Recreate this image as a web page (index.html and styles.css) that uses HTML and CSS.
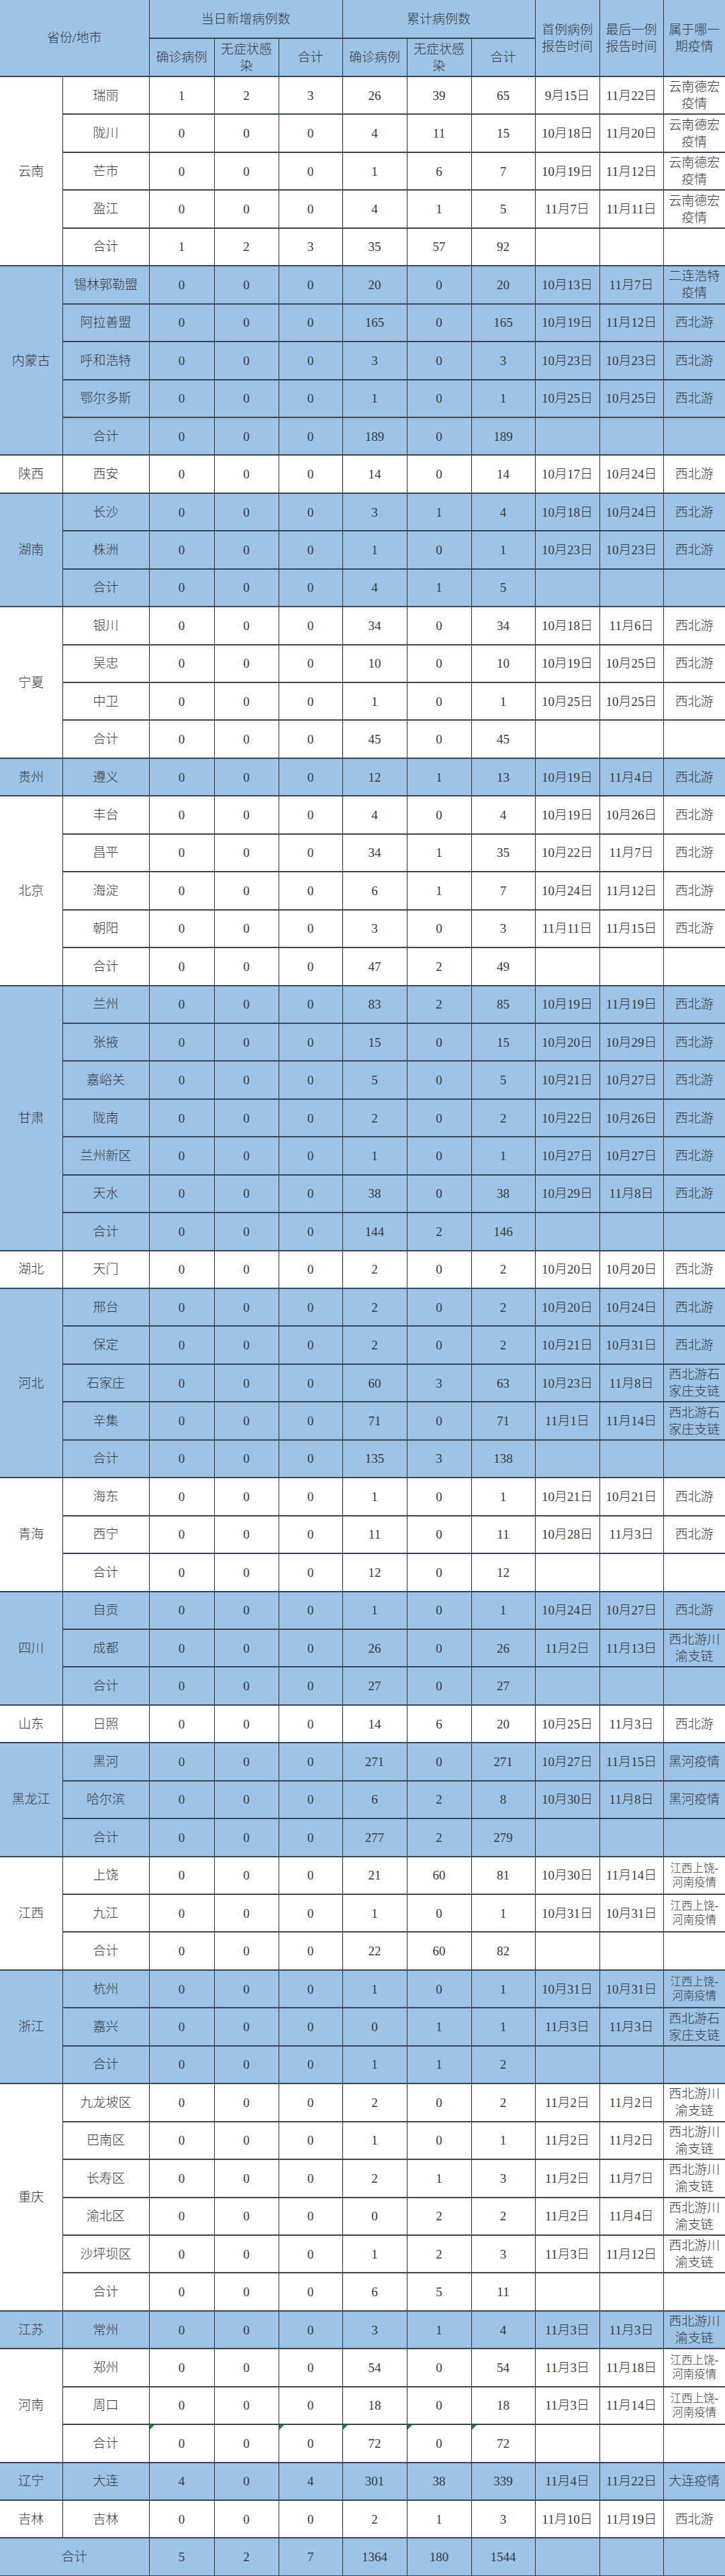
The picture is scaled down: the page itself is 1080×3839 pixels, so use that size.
FILE: index.html
```html
<!DOCTYPE html>
<html lang="zh-CN">
<head>
<meta charset="utf-8">
<title>疫情统计表</title>
<link rel="stylesheet" href="styles.css">
</head>
<body>
<table class="tbl">
<colgroup>
<col class="w-prov"><col class="w-city"><col class="w-n1"><col class="w-n2"><col class="w-n3"><col class="w-n4"><col class="w-n5"><col class="w-n6"><col class="w-d1"><col class="w-d2"><col class="w-tag">
</colgroup>
<thead>
<tr class="hr">
<th colspan="2" rowspan="2" class="p">省份/地市</th>
<th colspan="3">当日新增病例数</th>
<th colspan="3">累计病例数</th>
<th rowspan="2">首例病例报告时间</th>
<th rowspan="2">最后一例报告时间</th>
<th rowspan="2" class="last">属于哪一期疫情</th>
</tr>
<tr class="hr">
<th>确诊病例</th><th>无症状感染</th><th>合计</th><th>确诊病例</th><th>无症状感染</th><th>合计</th>
</tr>
</thead>
<tbody>
<tr class="w"><td class="p" rowspan="5">云南</td><td>瑞丽</td><td>1</td><td>2</td><td>3</td><td>26</td><td>39</td><td>65</td><td>9月15日</td><td>11月22日</td><td class="last">云南德宏疫情</td></tr>
<tr class="w"><td>陇川</td><td>0</td><td>0</td><td>0</td><td>4</td><td>11</td><td>15</td><td>10月18日</td><td>11月20日</td><td class="last">云南德宏疫情</td></tr>
<tr class="w"><td>芒市</td><td>0</td><td>0</td><td>0</td><td>1</td><td>6</td><td>7</td><td>10月19日</td><td>11月12日</td><td class="last">云南德宏疫情</td></tr>
<tr class="w"><td>盈江</td><td>0</td><td>0</td><td>0</td><td>4</td><td>1</td><td>5</td><td>11月7日</td><td>11月11日</td><td class="last">云南德宏疫情</td></tr>
<tr class="w"><td>合计</td><td>1</td><td>2</td><td>3</td><td>35</td><td>57</td><td>92</td><td></td><td></td><td class="last"></td></tr>

<tr class="b"><td class="p" rowspan="5">内蒙古</td><td>锡林郭勒盟</td><td>0</td><td>0</td><td>0</td><td>20</td><td>0</td><td>20</td><td>10月13日</td><td>11月7日</td><td class="last">二连浩特疫情</td></tr>
<tr class="b"><td>阿拉善盟</td><td>0</td><td>0</td><td>0</td><td>165</td><td>0</td><td>165</td><td>10月19日</td><td>11月12日</td><td class="last">西北游</td></tr>
<tr class="b"><td>呼和浩特</td><td>0</td><td>0</td><td>0</td><td>3</td><td>0</td><td>3</td><td>10月23日</td><td>10月23日</td><td class="last">西北游</td></tr>
<tr class="b"><td>鄂尔多斯</td><td>0</td><td>0</td><td>0</td><td>1</td><td>0</td><td>1</td><td>10月25日</td><td>10月25日</td><td class="last">西北游</td></tr>
<tr class="b"><td>合计</td><td>0</td><td>0</td><td>0</td><td>189</td><td>0</td><td>189</td><td></td><td></td><td class="last"></td></tr>

<tr class="w"><td class="p">陕西</td><td>西安</td><td>0</td><td>0</td><td>0</td><td>14</td><td>0</td><td>14</td><td>10月17日</td><td>10月24日</td><td class="last">西北游</td></tr>

<tr class="b"><td class="p" rowspan="3">湖南</td><td>长沙</td><td>0</td><td>0</td><td>0</td><td>3</td><td>1</td><td>4</td><td>10月18日</td><td>10月24日</td><td class="last">西北游</td></tr>
<tr class="b"><td>株洲</td><td>0</td><td>0</td><td>0</td><td>1</td><td>0</td><td>1</td><td>10月23日</td><td>10月23日</td><td class="last">西北游</td></tr>
<tr class="b"><td>合计</td><td>0</td><td>0</td><td>0</td><td>4</td><td>1</td><td>5</td><td></td><td></td><td class="last"></td></tr>

<tr class="w"><td class="p" rowspan="4">宁夏</td><td>银川</td><td>0</td><td>0</td><td>0</td><td>34</td><td>0</td><td>34</td><td>10月18日</td><td>11月6日</td><td class="last">西北游</td></tr>
<tr class="w"><td>吴忠</td><td>0</td><td>0</td><td>0</td><td>10</td><td>0</td><td>10</td><td>10月19日</td><td>10月25日</td><td class="last">西北游</td></tr>
<tr class="w"><td>中卫</td><td>0</td><td>0</td><td>0</td><td>1</td><td>0</td><td>1</td><td>10月25日</td><td>10月25日</td><td class="last">西北游</td></tr>
<tr class="w"><td>合计</td><td>0</td><td>0</td><td>0</td><td>45</td><td>0</td><td>45</td><td></td><td></td><td class="last"></td></tr>

<tr class="b"><td class="p">贵州</td><td>遵义</td><td>0</td><td>0</td><td>0</td><td>12</td><td>1</td><td>13</td><td>10月19日</td><td>11月4日</td><td class="last">西北游</td></tr>

<tr class="w"><td class="p" rowspan="5">北京</td><td>丰台</td><td>0</td><td>0</td><td>0</td><td>4</td><td>0</td><td>4</td><td>10月19日</td><td>10月26日</td><td class="last">西北游</td></tr>
<tr class="w"><td>昌平</td><td>0</td><td>0</td><td>0</td><td>34</td><td>1</td><td>35</td><td>10月22日</td><td>11月7日</td><td class="last">西北游</td></tr>
<tr class="w"><td>海淀</td><td>0</td><td>0</td><td>0</td><td>6</td><td>1</td><td>7</td><td>10月24日</td><td>11月12日</td><td class="last">西北游</td></tr>
<tr class="w"><td>朝阳</td><td>0</td><td>0</td><td>0</td><td>3</td><td>0</td><td>3</td><td>11月11日</td><td>11月15日</td><td class="last">西北游</td></tr>
<tr class="w"><td>合计</td><td>0</td><td>0</td><td>0</td><td>47</td><td>2</td><td>49</td><td></td><td></td><td class="last"></td></tr>

<tr class="b"><td class="p" rowspan="7">甘肃</td><td>兰州</td><td>0</td><td>0</td><td>0</td><td>83</td><td>2</td><td>85</td><td>10月19日</td><td>11月19日</td><td class="last">西北游</td></tr>
<tr class="b"><td>张掖</td><td>0</td><td>0</td><td>0</td><td>15</td><td>0</td><td>15</td><td>10月20日</td><td>10月29日</td><td class="last">西北游</td></tr>
<tr class="b"><td>嘉峪关</td><td>0</td><td>0</td><td>0</td><td>5</td><td>0</td><td>5</td><td>10月21日</td><td>10月27日</td><td class="last">西北游</td></tr>
<tr class="b"><td>陇南</td><td>0</td><td>0</td><td>0</td><td>2</td><td>0</td><td>2</td><td>10月22日</td><td>10月26日</td><td class="last">西北游</td></tr>
<tr class="b"><td>兰州新区</td><td>0</td><td>0</td><td>0</td><td>1</td><td>0</td><td>1</td><td>10月27日</td><td>10月27日</td><td class="last">西北游</td></tr>
<tr class="b"><td>天水</td><td>0</td><td>0</td><td>0</td><td>38</td><td>0</td><td>38</td><td>10月29日</td><td>11月8日</td><td class="last">西北游</td></tr>
<tr class="b"><td>合计</td><td>0</td><td>0</td><td>0</td><td>144</td><td>2</td><td>146</td><td></td><td></td><td class="last"></td></tr>

<tr class="w"><td class="p">湖北</td><td>天门</td><td>0</td><td>0</td><td>0</td><td>2</td><td>0</td><td>2</td><td>10月20日</td><td>10月20日</td><td class="last">西北游</td></tr>

<tr class="b"><td class="p" rowspan="5">河北</td><td>邢台</td><td>0</td><td>0</td><td>0</td><td>2</td><td>0</td><td>2</td><td>10月20日</td><td>10月24日</td><td class="last">西北游</td></tr>
<tr class="b"><td>保定</td><td>0</td><td>0</td><td>0</td><td>2</td><td>0</td><td>2</td><td>10月21日</td><td>10月31日</td><td class="last">西北游</td></tr>
<tr class="b"><td>石家庄</td><td>0</td><td>0</td><td>0</td><td>60</td><td>3</td><td>63</td><td>10月23日</td><td>11月8日</td><td class="last">西北游石家庄支链</td></tr>
<tr class="b"><td>辛集</td><td>0</td><td>0</td><td>0</td><td>71</td><td>0</td><td>71</td><td>11月1日</td><td>11月14日</td><td class="last">西北游石家庄支链</td></tr>
<tr class="b"><td>合计</td><td>0</td><td>0</td><td>0</td><td>135</td><td>3</td><td>138</td><td></td><td></td><td class="last"></td></tr>

<tr class="w"><td class="p" rowspan="3">青海</td><td>海东</td><td>0</td><td>0</td><td>0</td><td>1</td><td>0</td><td>1</td><td>10月21日</td><td>10月21日</td><td class="last">西北游</td></tr>
<tr class="w"><td>西宁</td><td>0</td><td>0</td><td>0</td><td>11</td><td>0</td><td>11</td><td>10月28日</td><td>11月3日</td><td class="last">西北游</td></tr>
<tr class="w"><td>合计</td><td>0</td><td>0</td><td>0</td><td>12</td><td>0</td><td>12</td><td></td><td></td><td class="last"></td></tr>

<tr class="b"><td class="p" rowspan="3">四川</td><td>自贡</td><td>0</td><td>0</td><td>0</td><td>1</td><td>0</td><td>1</td><td>10月24日</td><td>10月27日</td><td class="last">西北游</td></tr>
<tr class="b"><td>成都</td><td>0</td><td>0</td><td>0</td><td>26</td><td>0</td><td>26</td><td>11月2日</td><td>11月13日</td><td class="last">西北游川渝支链</td></tr>
<tr class="b"><td>合计</td><td>0</td><td>0</td><td>0</td><td>27</td><td>0</td><td>27</td><td></td><td></td><td class="last"></td></tr>

<tr class="w"><td class="p">山东</td><td>日照</td><td>0</td><td>0</td><td>0</td><td>14</td><td>6</td><td>20</td><td>10月25日</td><td>11月3日</td><td class="last">西北游</td></tr>

<tr class="b"><td class="p" rowspan="3">黑龙江</td><td>黑河</td><td>0</td><td>0</td><td>0</td><td>271</td><td>0</td><td>271</td><td>10月27日</td><td>11月15日</td><td class="last">黑河疫情</td></tr>
<tr class="b"><td>哈尔滨</td><td>0</td><td>0</td><td>0</td><td>6</td><td>2</td><td>8</td><td>10月30日</td><td>11月8日</td><td class="last">黑河疫情</td></tr>
<tr class="b"><td>合计</td><td>0</td><td>0</td><td>0</td><td>277</td><td>2</td><td>279</td><td></td><td></td><td class="last"></td></tr>

<tr class="w"><td class="p" rowspan="3">江西</td><td>上饶</td><td>0</td><td>0</td><td>0</td><td>21</td><td>60</td><td>81</td><td>10月30日</td><td>11月14日</td><td class="last sm">江西上饶-河南疫情</td></tr>
<tr class="w"><td>九江</td><td>0</td><td>0</td><td>0</td><td>1</td><td>0</td><td>1</td><td>10月31日</td><td>10月31日</td><td class="last sm">江西上饶-河南疫情</td></tr>
<tr class="w"><td>合计</td><td>0</td><td>0</td><td>0</td><td>22</td><td>60</td><td>82</td><td></td><td></td><td class="last"></td></tr>

<tr class="b"><td class="p" rowspan="3">浙江</td><td>杭州</td><td>0</td><td>0</td><td>0</td><td>1</td><td>0</td><td>1</td><td>10月31日</td><td>10月31日</td><td class="last sm">江西上饶-河南疫情</td></tr>
<tr class="b"><td>嘉兴</td><td>0</td><td>0</td><td>0</td><td>0</td><td>1</td><td>1</td><td>11月3日</td><td>11月3日</td><td class="last">西北游石家庄支链</td></tr>
<tr class="b"><td>合计</td><td>0</td><td>0</td><td>0</td><td>1</td><td>1</td><td>2</td><td></td><td></td><td class="last"></td></tr>

<tr class="w"><td class="p" rowspan="6">重庆</td><td>九龙坡区</td><td>0</td><td>0</td><td>0</td><td>2</td><td>0</td><td>2</td><td>11月2日</td><td>11月2日</td><td class="last">西北游川渝支链</td></tr>
<tr class="w"><td>巴南区</td><td>0</td><td>0</td><td>0</td><td>1</td><td>0</td><td>1</td><td>11月2日</td><td>11月2日</td><td class="last">西北游川渝支链</td></tr>
<tr class="w"><td>长寿区</td><td>0</td><td>0</td><td>0</td><td>2</td><td>1</td><td>3</td><td>11月2日</td><td>11月7日</td><td class="last">西北游川渝支链</td></tr>
<tr class="w"><td>渝北区</td><td>0</td><td>0</td><td>0</td><td>0</td><td>2</td><td>2</td><td>11月2日</td><td>11月4日</td><td class="last">西北游川渝支链</td></tr>
<tr class="w"><td>沙坪坝区</td><td>0</td><td>0</td><td>0</td><td>1</td><td>2</td><td>3</td><td>11月3日</td><td>11月12日</td><td class="last">西北游川渝支链</td></tr>
<tr class="w"><td>合计</td><td>0</td><td>0</td><td>0</td><td>6</td><td>5</td><td>11</td><td></td><td></td><td class="last"></td></tr>

<tr class="b"><td class="p">江苏</td><td>常州</td><td>0</td><td>0</td><td>0</td><td>3</td><td>1</td><td>4</td><td>11月3日</td><td>11月3日</td><td class="last">西北游川渝支链</td></tr>

<tr class="w"><td class="p" rowspan="3">河南</td><td>郑州</td><td>0</td><td>0</td><td>0</td><td>54</td><td>0</td><td>54</td><td>11月3日</td><td>11月18日</td><td class="last sm">江西上饶-河南疫情</td></tr>
<tr class="w"><td>周口</td><td>0</td><td>0</td><td>0</td><td>18</td><td>0</td><td>18</td><td>11月3日</td><td>11月14日</td><td class="last sm">江西上饶-河南疫情</td></tr>
<tr class="w"><td>合计</td><td class="tri">0</td><td>0</td><td class="tri">0</td><td class="tri">72</td><td class="tri">0</td><td class="tri">72</td><td></td><td></td><td class="last"></td></tr>

<tr class="b"><td class="p">辽宁</td><td>大连</td><td>4</td><td>0</td><td>4</td><td>301</td><td>38</td><td>339</td><td>11月4日</td><td>11月22日</td><td class="last">大连疫情</td></tr>

<tr class="w"><td class="p">吉林</td><td>吉林</td><td>0</td><td>0</td><td>0</td><td>2</td><td>1</td><td>3</td><td>11月10日</td><td>11月19日</td><td class="last">西北游</td></tr>

<tr class="b"><td class="p" colspan="2">合计</td><td>5</td><td>2</td><td>7</td><td>1364</td><td>180</td><td>1544</td><td></td><td></td><td class="last"></td></tr>
</tbody>
</table>
</body>
</html>
```

FILE: styles.css
```css
html, body {
  margin: 0;
  padding: 0;
  background: #ffffff;
}

.tbl {
  width: 1080px;
  table-layout: fixed;
  border-collapse: collapse;
  font-family: "Liberation Serif", "Noto Sans CJK SC", serif;
  font-size: 19px;
  font-weight: 300;
  line-height: 25px;
  color: #383838;
}

.w-prov { width: 93px; }
.w-city { width: 129px; }
.w-n1 { width: 97px; }
.w-n2 { width: 96px; }
.w-n3 { width: 95px; }
.w-n4 { width: 96px; }
.w-n5 { width: 96px; }
.w-n6 { width: 95px; }
.w-d1 { width: 96px; }
.w-d2 { width: 95px; }
.w-tag { width: 92px; }

.tbl th,
.tbl td {
  padding: 0 6px;
  text-align: center;
  vertical-align: middle;
  white-space: normal;
  border-left: 1px solid #2e2e2e;
  border-right: 1px solid #2e2e2e;
  border-top: 2px solid #3c4652;
  border-bottom: 2px solid #3c4652;
  position: relative;
}

.tbl th {
  font-weight: 300;
  background: #9dc3e6;
}

.hr { height: 57px; }

.tbl thead tr:first-child th { border-top: none; }

.tbl tbody tr { height: 56.44px; }

.tbl .p { border-left: none; }
.tbl .last { border-right: none; }

.w td { background: #ffffff; }
.b td { background: #9dc3e6; }

.tbl td.sm {
  font-size: 16.5px;
  line-height: 21px;
  padding: 0 3px;
}

.tbl td.tri::before {
  content: "";
  position: absolute;
  top: 0;
  left: 0;
  border-top: 7px solid #1f8a2a;
  border-right: 7px solid transparent;
}
```
